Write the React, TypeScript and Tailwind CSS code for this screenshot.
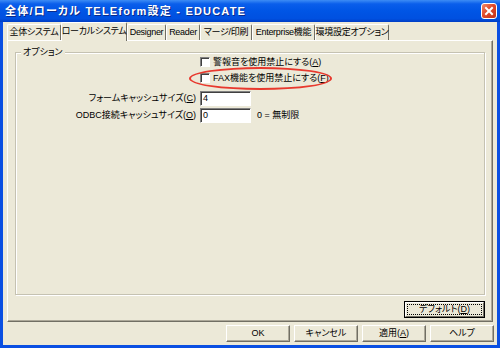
import React from "react";

const tabs = [
    { label: "全体システム", w: "w-[54px]" },
    { label: "ローカルシステム", w: "w-[66px]", active: true },
    { label: "Designer", w: "w-[39px]" },
    { label: "Reader", w: "w-[34px]" },
    { label: "マージ/印刷", w: "w-[52px]" },
    { label: "Enterprise機能", w: "w-[63px]" },
    { label: "環境設定オプション", w: "w-[74px]" },
];

function Btn({ children, isDefault }: { children: React.ReactNode; isDefault?: boolean }) {
    if (isDefault) {
        return (
            <button className="w-[81px] h-[17px] border border-black bg-[#ece9d8] p-0">
                <div className="h-full border border-t-white border-l-white border-r-[#716f64] border-b-[#716f64] p-[1px]">
                    <div className="h-full border border-dotted border-black flex items-center justify-center">
                        {children}
                    </div>
                </div>
            </button>
        );
    }
    return (
        <button className="w-[64px] h-[17px] flex items-center justify-center bg-[#ece9d8] border border-t-white border-l-white border-r-[#716f64] border-b-[#716f64] shadow-[inset_-1px_-1px_0_#aca899]">
            {children}
        </button>
    );
}

function CheckBox() {
    return (
        <div className="w-[10px] h-[10px] bg-white border border-t-[#808080] border-l-[#808080] border-r-white border-b-white shadow-[inset_1px_1px_0_#404040]" />
    );
}

function TextBox({ value }: { value: string }) {
    return (
        <div className="w-[51px] h-[15px] bg-white border border-t-[#808080] border-l-[#808080] border-r-white border-b-white shadow-[inset_1px_1px_0_#404040] pl-[2px] flex items-center">
            {value}
        </div>
    );
}

export default function App() {
    return (
        <div className="w-[500px] h-[348px] bg-[#0a4fe2] flex flex-col overflow-hidden text-[9px] leading-none text-black font-['Liberation_Sans','Noto_Sans_CJK_JP',sans-serif] [font-feature-settings:'palt']">
            {/* TITLE BAR */}
            <div className="h-[22px] shrink-0 flex items-center justify-between pl-[5px] pr-[3px] bg-[linear-gradient(to_bottom,#3d8cf5_0%,#0a5eeb_18%,#0055e5_50%,#0050e0_85%,#003dc4_100%)]">
                <span className="text-white font-bold text-[11px] tracking-[1.2px] whitespace-nowrap [text-shadow:1px_1px_0_#0a2a8a]">
                    全体/ローカル TELEform設定 - EDUCATE
                </span>
                <div className="w-[16px] h-[16px] rounded-[3px] border border-white bg-[linear-gradient(135deg,#f08a6a_0%,#e04a2a_45%,#c2331a_100%)] flex items-center justify-center">
                    <svg width="10" height="10" viewBox="0 0 10 10">
                        <path d="M2 2 L8 8 M8 2 L2 8" stroke="white" strokeWidth="2" strokeLinecap="square" />
                    </svg>
                </div>
            </div>

            {/* BODY */}
            <div className="flex-1 mx-[3px] mb-[3px] bg-[#ece9d8] flex flex-col px-[4px]">
                {/* TABS */}
                <div className="h-[18px] shrink-0 flex items-end tracking-[-0.3px] whitespace-nowrap">
                    {tabs.map((t) =>
                        t.active ? (
                            <div
                                key={t.label}
                                className={`${t.w} h-[19px] -mb-px relative z-10 bg-[#ece9d8] border-t border-l border-t-white border-l-white border-r border-r-[#716f64] rounded-t-[2px] flex items-center justify-center pb-[1px]`}
                            >
                                {t.label}
                            </div>
                        ) : (
                            <div
                                key={t.label}
                                className={`${t.w} h-[16px] border-t border-l border-t-white border-l-white border-r border-r-[#716f64] rounded-t-[2px] flex items-center justify-center`}
                            >
                                {t.label}
                            </div>
                        )
                    )}
                </div>

                {/* TAB PANEL */}
                <div className="h-[282px] shrink-0 flex flex-col border border-t-white border-l-white border-r-[#716f64] border-b-[#716f64] shadow-[inset_-1px_-1px_0_#aca899] pt-[6px] pl-[7px] pr-[7px] pb-[3px]">
                    <fieldset className="flex-1 min-h-0 border border-[#c5c2b2] shadow-[inset_1px_1px_0_white,1px_1px_0_white] whitespace-nowrap">
                        <legend className="ml-[5px] px-[2px] leading-[10px] bg-[#ece9d8]">オプション</legend>

                        <div className="flex h-[10px] items-center">
                            <div className="w-[184px]" />
                            <CheckBox />
                            <span className="ml-[3px]">
                                警報音を使用禁止にする(<span className="underline">A</span>)
                            </span>
                        </div>

                        <div className="relative flex h-[10px] mt-[6px] items-center">
                            <div className="w-[184px]" />
                            <CheckBox />
                            <span className="ml-[3px]">
                                FAX機能を使用禁止にする(<span className="underline">F</span>)
                            </span>
                            {/* red annotation ring */}
                            <div className="absolute left-[173px] -top-[6px] w-[143px] h-[23px] rounded-[50%] border-2 border-[#e8392e]" />
                        </div>

                        <div className="flex h-[15px] mt-[8px] items-center">
                            <div className="w-[184px] text-right pr-[4px]">
                                フォームキャッシュサイズ(<span className="underline">C</span>)
                            </div>
                            <TextBox value="4" />
                        </div>

                        <div className="flex h-[15px] mt-[2px] items-center">
                            <div className="w-[184px] text-right pr-[4px]">
                                ODBC接続キャッシュサイズ(<span className="underline">O</span>)
                            </div>
                            <TextBox value="0" />
                            <span className="ml-[6px]">0 = 無制限</span>
                        </div>
                    </fieldset>

                    <div className="mt-[6px] flex justify-end">
                        <Btn isDefault>
                            デフォルト(<span className="underline">D</span>)
                        </Btn>
                    </div>
                </div>

                {/* BOTTOM BUTTONS */}
                <div className="mt-[3px] h-[17px] flex justify-end gap-[4px] -mr-[1px] whitespace-nowrap">
                    <Btn>OK</Btn>
                    <Btn>キャンセル</Btn>
                    <Btn>
                        適用(<span className="underline">A</span>)
                    </Btn>
                    <Btn>ヘルプ</Btn>
                </div>
            </div>
        </div>
    );
}
